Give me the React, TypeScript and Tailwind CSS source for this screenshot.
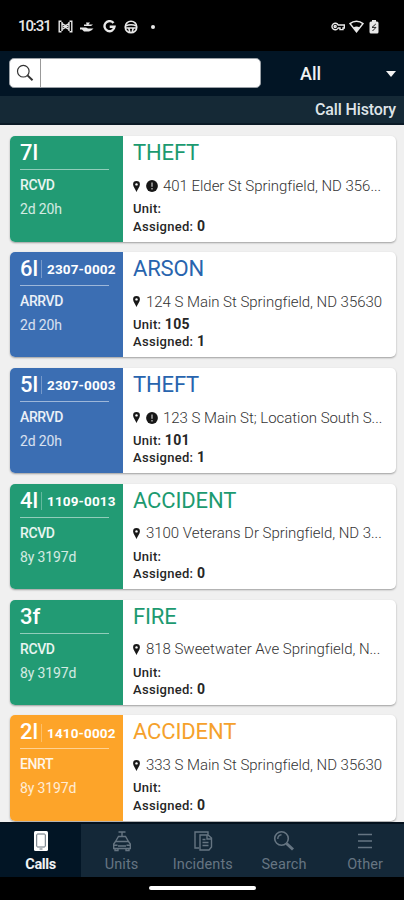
import React from "react";
import clsx from "clsx";

type Call = {
  id: string;
  number?: string;
  status: string;
  age: string;
  type: string;
  address: string;
  alert?: boolean;
  unit?: string;
  assigned: number;
  color: "green" | "blue" | "orange";
};

const calls: Call[] = [
  { id: "7l", status: "RCVD", age: "2d 20h", type: "THEFT", address: "401 Elder St Springfield, ND 356...", alert: true, assigned: 0, color: "green" },
  { id: "6l", number: "2307-0002", status: "ARRVD", age: "2d 20h", type: "ARSON", address: "124 S Main St Springfield, ND 35630", unit: "105", assigned: 1, color: "blue" },
  { id: "5l", number: "2307-0003", status: "ARRVD", age: "2d 20h", type: "THEFT", address: "123 S Main St; Location South S...", alert: true, unit: "101", assigned: 1, color: "blue" },
  { id: "4l", number: "1109-0013", status: "RCVD", age: "8y 3197d", type: "ACCIDENT", address: "3100 Veterans Dr Springfield, ND 3...", assigned: 0, color: "green" },
  { id: "3f", status: "RCVD", age: "8y 3197d", type: "FIRE", address: "818 Sweetwater Ave Springfield, N...", assigned: 0, color: "green" },
  { id: "2l", number: "1410-0002", status: "ENRT", age: "8y 3197d", type: "ACCIDENT", address: "333 S Main St Springfield, ND 35630", assigned: 0, color: "orange" },
];

const panelColors = {
  green: "bg-[#229b74]",
  blue: "bg-[#3b6eb3]",
  orange: "bg-[#fda429]",
};

const titleColors = {
  green: "text-[#1c9a70]",
  blue: "text-[#2864ae]",
  orange: "text-[#f5a12c]",
};

function StatusBar() {
  return (
    <div className="h-[51px] shrink-0 flex items-center justify-between bg-black pl-[18px] pr-[25px] pt-[2px] text-[#e8e8e8]">
      <div className="flex items-center">
        <span className="w-[33px] text-[15px] font-medium tracking-[-1.1px]">10:31</span>
        <svg className="ml-[7px]" width="15" height="13" viewBox="0 0 15 13" fill="none" stroke="currentColor" strokeWidth="1.4">
          <path d="M3.5 1.2H1.2v10.6h2.3M11.5 1.2h2.3v10.6h-2.3M4 2v9M11 2v9M4 3.5l3.5 2L11 3.5M4 9.5l3.5-2 3.5 2M5 6.5h5" />
        </svg>
        <svg className="ml-[7px]" width="14" height="12" viewBox="0 0 14 12" fill="currentColor">
          <path d="M6 1.5h4L8.5 3.4H13L11 5H4V3.6h2.6zM0 6.4h6l2 1h5.5Q12 9.5 9 10.4H4L2 8.5H0z" />
        </svg>
        <svg className="ml-[9px]" width="13" height="13" viewBox="0 0 13 13" fill="none" stroke="currentColor" strokeWidth="2.4">
          <path d="M10.5 3.1A5 5 0 1 0 11.5 6.7H6.7" />
        </svg>
        <svg className="ml-[8px]" width="14" height="14" viewBox="0 0 14 14" fill="none" stroke="currentColor" strokeWidth="1.6">
          <circle cx="7" cy="7" r="5.8" />
          <path d="M1.5 6Q7 3.5 12.5 6M1.5 8h3.2l1.3 4.5M12.5 8H9.3L8 12.5M4.7 8h4.6" />
        </svg>
        <span className="ml-[13px] size-[4px] rounded-full bg-current" />
      </div>
      <div className="flex items-center">
        <svg width="14" height="9" viewBox="0 0 14 9" fill="none" stroke="currentColor" strokeWidth="1.4">
          <path d="M7.2 3A3.3 3.3 0 1 0 7.2 6H9v1.6h3V6h1.3V3z" />
          <circle cx="4.2" cy="4.5" r="1" />
        </svg>
        <svg className="ml-[4px]" width="15" height="13" viewBox="0 0 15 13">
          <path d="M1 3.6C4.7.3 10.3.3 14 3.6L7.5 11.8z" fill="none" stroke="currentColor" strokeWidth="1.5" />
          <path d="M4.4 7.4Q7.5 5.8 10.6 7.4L7.5 12z" fill="currentColor" />
        </svg>
        <svg className="ml-[5px]" width="10" height="14" viewBox="0 0 10 14">
          <path d="M3 0h4v1.5h1Q9.5 1.5 9.5 3v9Q9.5 13.5 8 13.5H2Q.5 13.5.5 12V3Q.5 1.5 2 1.5h1z" fill="currentColor" />
          <path d="M6.8 4L3 7.4h4L3.5 11" fill="none" stroke="#222" strokeWidth="1" />
        </svg>
      </div>
    </div>
  );
}

function Header() {
  return (
    <header className="shrink-0">
      <div className="h-[45px] flex items-center bg-[#021525] pl-[9px]">
        <div className="w-[252px] h-[30px] -mt-[1px] flex rounded-[5px] border border-[#9aa0a6] bg-white">
          <div className="w-[31px] flex items-center justify-center border-r border-[#999]">
            <svg width="18" height="18" viewBox="0 0 18 18" fill="none" stroke="#333">
              <circle cx="7.3" cy="7.2" r="5.8" strokeWidth="1.2" />
              <path d="M11.5 11.4L16.5 16.2" strokeWidth="2" />
            </svg>
          </div>
        </div>
        <span className="ml-[39px] text-[18px] leading-none font-medium text-[#eef1f3]">All</span>
        <span className="ml-auto mr-[8px] border-x-[5.5px] border-t-[6px] border-x-transparent border-t-[#f2f2f2]" />
      </div>
      <div className="h-[29px] flex items-center justify-end bg-[#152936] border-b-2 border-[#0b1a26] pt-[1px] pr-[8px] text-[16px] font-medium tracking-[-0.15px] text-[#dfe4e8]">
        Call History
      </div>
    </header>
  );
}

function CallCard({ call }: { call: Call }) {
  return (
    <article className="h-[105.6px] shrink-0 flex overflow-hidden rounded-[5px] bg-white shadow-[0_1px_2px_rgba(0,0,0,0.35)]">
      {/* Status panel */}
      <div className={clsx("w-[113px] shrink-0 pl-[10px] pt-[4px] text-white", panelColors[call.color])}>
        <div className="flex h-[26px] items-center whitespace-nowrap">
          <span className="w-[17px] text-[22px] leading-none font-medium">{call.id}</span>
          {call.number && (
            <>
              <span className="ml-[4px] mt-[1px] h-[18px] w-px bg-white/30" />
              <span className="ml-[5px] mt-[2px] text-[13.5px] leading-none font-bold tracking-[0.15px]">{call.number}</span>
            </>
          )}
        </div>
        <div className="mt-[3px] h-px w-[89px] bg-white/50" />
        <p className="mt-[6px] text-[14px] leading-[18px] font-medium tracking-[-0.4px] text-white/90">{call.status}</p>
        <p className="mt-[6px] text-[14px] leading-[18px] tracking-[-0.15px] text-white/80">{call.age}</p>
      </div>

      {/* Call details */}
      <div className="min-w-0 flex-1 pl-[10px] pt-[4px]">
        <h2 className={clsx("text-[22px] leading-[26px] tracking-[-0.15px]", titleColors[call.color])}>{call.type}</h2>
        <div className="mt-[11px] flex h-[18px] items-center whitespace-nowrap">
          <svg className="shrink-0" width="7" height="11" viewBox="0 0 7 11">
            <path d="M3.5 0A3.4 3.4 0 0 0 .1 3.5C.1 6 2.4 8 3.5 11 4.6 8 6.9 6 6.9 3.5A3.4 3.4 0 0 0 3.5 0z" fill="#181818" />
            <circle cx="3.5" cy="3.4" r="1.2" fill="#fff" />
          </svg>
          {call.alert && (
            <svg className="ml-[6px] shrink-0" width="12" height="12" viewBox="0 0 12 12">
              <circle cx="6" cy="6" r="5.9" fill="#171717" />
              <path d="M6 2.5v4.3M6 8v1.5" stroke="#aaa" strokeWidth="1.5" />
            </svg>
          )}
          <span className={clsx("text-[15px] font-light tracking-[-0.03px] text-[#333]", call.alert ? "ml-[5px]" : "ml-[6px]")}>
            {call.address}
          </span>
        </div>
        <div className="mt-[5px] text-[13px] leading-[17.5px] font-medium tracking-[0.3px] text-[#262626]">
          <p>Unit: <b className="text-[14px]">{call.unit}</b></p>
          <p>Assigned: <b className="text-[14px]">{call.assigned}</b></p>
        </div>
      </div>
    </article>
  );
}

const iconProps = { width: 22, height: 22, viewBox: "0 0 22 22", fill: "none", stroke: "currentColor", strokeWidth: 1.4 };

const tabs = [
  {
    label: "Calls",
    icon: (
      <svg {...iconProps}>
        <rect x="4" y="1" width="14" height="20" rx="1.5" fill="#fff" stroke="none" />
        <rect x="6.7" y="4" width="8.6" height="13" rx="1" stroke="#65717b" strokeWidth="1" />
        <path d="M9.5 19h3" stroke="#65717b" strokeWidth="1" />
      </svg>
    ),
  },
  {
    label: "Units",
    icon: (
      <svg {...iconProps}>
        <path d="M7.5 2h7M11 2v4M4.5 11.5L7.5 6.5h7l3 5M4.5 11.5h13L19.3 14v4.5H2.7V14zM3 15.3h3.5M15.5 15.3H19M7 16h8M4 18.5v2h3v-2M15 18.5v2h3v-2" />
      </svg>
    ),
  },
  {
    label: "Incidents",
    icon: (
      <svg {...iconProps}>
        <path d="M7 18H3V2h13v3M8 5h8l3.5 3v9L17 20H8zM15 5v4h4M10.5 9.5h3M10.5 12.5h6M10.5 15.5h6" />
      </svg>
    ),
  },
  {
    label: "Search",
    icon: (
      <svg {...iconProps}>
        <circle cx="8.5" cy="8.5" r="6.8" strokeWidth="1.6" />
        <path d="M4.8 9A4 4 0 0 1 8.5 4.7" />
        <path d="M13.5 13.5l6.5 6" strokeWidth="3" />
      </svg>
    ),
  },
  {
    label: "Other",
    icon: (
      <svg {...iconProps}>
        <path d="M4 4.5h14M4 11h14M4 17.5h14" />
      </svg>
    ),
  },
];

export default function App() {
  return (
    <div className="flex h-[900px] w-[404px] flex-col overflow-hidden bg-black font-[Roboto,sans-serif]">
      <StatusBar />
      <Header />
      <main className="flex min-h-0 flex-1 flex-col gap-[10.3px] overflow-hidden bg-[#f0f0f0] pl-[10px] pr-[8px] pt-[11px]">
        {calls.map((call) => (
          <CallCard key={call.id} call={call} />
        ))}
      </main>
      <nav className="h-[55px] shrink-0 flex border-t-2 border-[#04111d] bg-[#142838]">
        {tabs.map((tab, i) => (
          <div
            key={tab.label}
            className={clsx(
              "flex shrink-0 flex-col items-center pt-[6px]",
              i === 0
                ? "w-[81px] bg-[#021525] font-bold text-[#f0f2f4] tracking-[-0.4px]"
                : "w-[81.2px] text-[#667582] tracking-[0.1px]"
            )}
          >
            {tab.icon}
            <span className="mt-[4px] text-[14.5px] leading-[18px]">{tab.label}</span>
          </div>
        ))}
      </nav>
      <div className="h-[23px] shrink-0 flex justify-center pt-[9px]">
        <div className="h-[4px] w-[107px] rounded-full bg-white" />
      </div>
    </div>
  );
}
